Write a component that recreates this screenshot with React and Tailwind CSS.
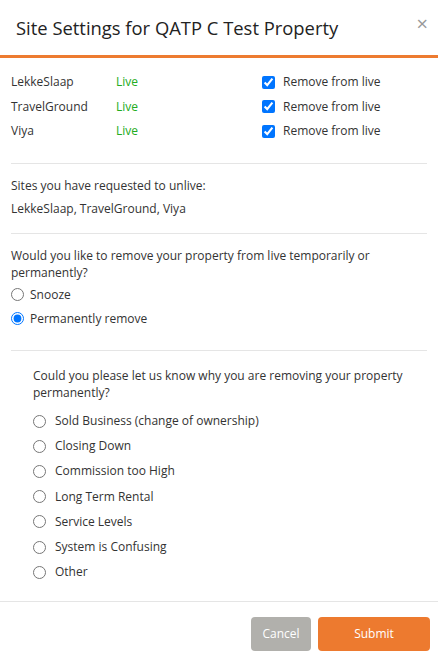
const sites = ["LekkeSlaap", "TravelGround", "Viya"];
const reasons = [
  "Sold Business (change of ownership)",
  "Closing Down",
  "Commission too High",
  "Long Term Rental",
  "Service Levels",
  "System is Confusing",
  "Other",
];

export default function App() {
  return (
    <div className="w-[438px] h-[661px] bg-white text-[12px] text-[#333] font-['Open_Sans',sans-serif] overflow-hidden">
      <div className="h-[55px] flex items-center justify-between pl-4 pr-[10px]">
        <h2 className="text-[18.4px] text-[#222]">Site Settings for QATP C Test Property</h2>
        <button className="text-[#999] text-[20px] leading-none -mt-2">×</button>
      </div>
      <div className="h-[3px] bg-[#ed7b30]" />

      <div className="px-[11px]">
        <div className="pt-3">
          {sites.map((s) => (
            <div key={s} className="h-[24.5px] flex items-center">
              <span className="w-[105px]">{s}</span>
              <span className="w-[146px] text-[#22ac22]">Live</span>
              <input type="checkbox" defaultChecked className="w-[13px] h-[13px] m-0" />
              <span className="ml-[8px]">Remove from live</span>
            </div>
          ))}
        </div>

        <div className="mt-[19px] border-t border-[#e5e5e5]" />
        <div className="pt-3">
          <p className="h-5 leading-5">Sites you have requested to unlive:</p>
          <p className="h-5 leading-5 mt-[3px]">LekkeSlaap, TravelGround, Viya</p>
        </div>

        <div className="mt-[14px] border-t border-[#e5e5e5]" />
        <div className="pt-[13px]">
          <p className="leading-[17px]">
            Would you like to remove your property from live temporarily or permanently?
          </p>
          <div className="mt-[2px]">
            <label className="h-6 flex items-center">
              <input type="radio" name="mode" className="w-[13px] h-[13px] m-0" />
              <span className="ml-[6px]">Snooze</span>
            </label>
            <label className="h-6 flex items-center">
              <input type="radio" name="mode" defaultChecked className="w-[13px] h-[13px] m-0" />
              <span className="ml-[6px]">Permanently remove</span>
            </label>
          </div>
        </div>

        <div className="mt-[19px] border-t border-[#e5e5e5]" />
        <div className="pt-[16px] pl-[22px]">
          <p className="leading-[17px]">
            Could you please let us know why you are removing your property permanently?
          </p>
          <div className="mt-[8px]">
            {reasons.map((r) => (
              <label key={r} className="h-[25.2px] flex items-center">
                <input type="radio" name="reason" className="w-[13px] h-[13px] m-0" />
                <span className="ml-[9px]">{r}</span>
              </label>
            ))}
          </div>
        </div>
      </div>

      <div className="mt-[16px] border-t border-[#e5e5e5]" />
      <div className="flex justify-end gap-[7px] pt-[15px] pr-2">
        <button className="w-[60px] h-[34px] rounded-[4px] bg-[#b1b0ac] text-white">Cancel</button>
        <button className="w-[112px] h-[34px] rounded-[4px] bg-[#ed7a2f] text-white">Submit</button>
      </div>
    </div>
  );
}
